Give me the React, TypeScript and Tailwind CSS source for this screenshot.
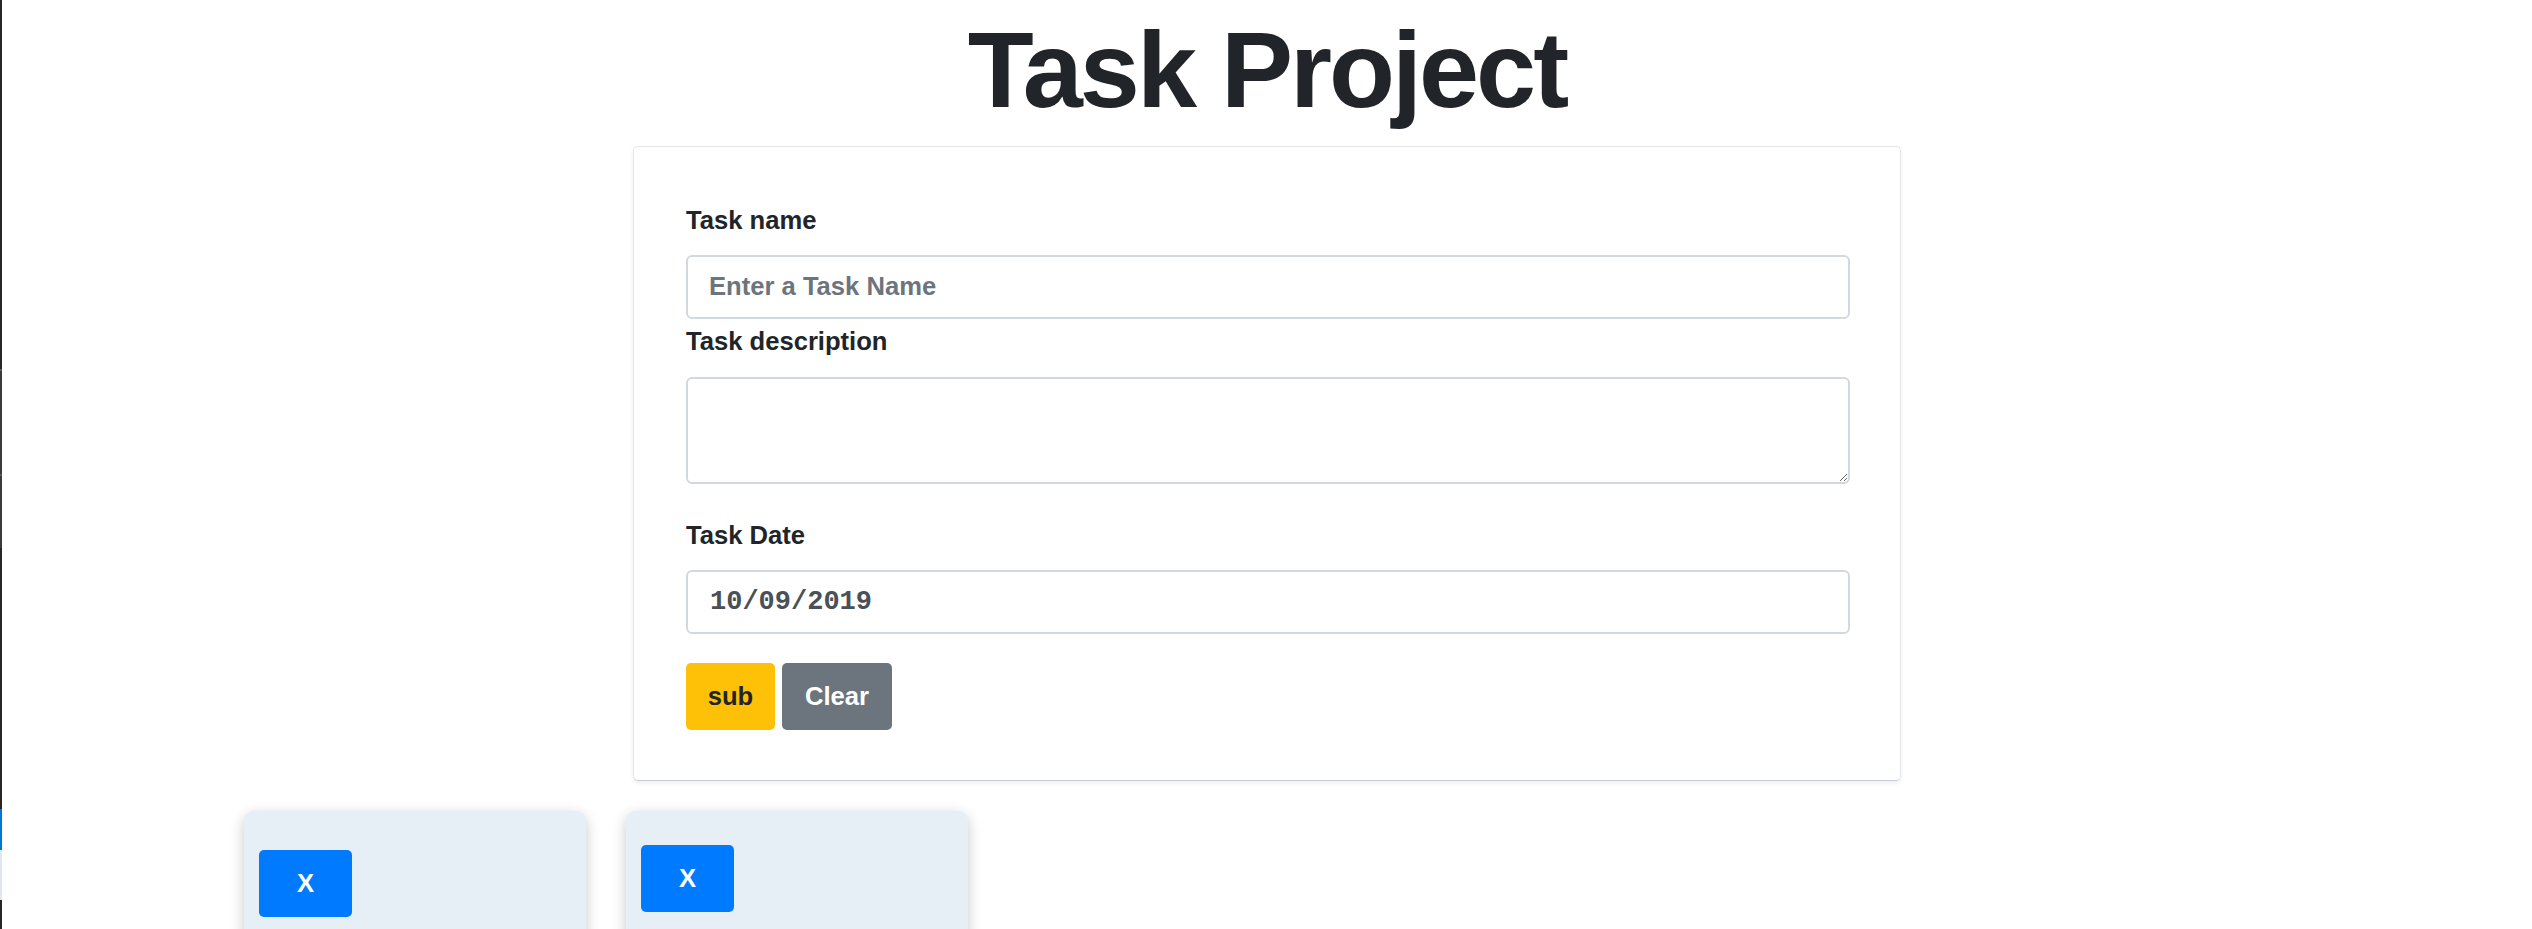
import React from "react";

function Label({ children, className = "" }: { children: React.ReactNode; className?: string }) {
  return (
    <label className={`block text-[25.6px] font-bold leading-[38px] text-[#212529] ${className}`}>
      {children}
    </label>
  );
}

function TaskCard({ topPad }: { topPad: string }) {
  return (
    <div
      className={`h-[220px] w-[342px] shrink-0 rounded-[10px] bg-[#e6eef6] pl-[15px] shadow-[0_4px_14px_0_rgba(0,0,0,0.22)] ${topPad}`}
    >
      <button
        type="button"
        className="flex h-[67px] w-[93px] items-center justify-center rounded-[5px] bg-[#007bff] text-[25.6px] font-bold text-white"
      >
        X
      </button>
    </div>
  );
}

export default function App() {
  return (
    <div className="flex min-h-[929px] bg-white font-['Liberation_Sans',Arial,sans-serif]">
      <div className="flex w-[2px] shrink-0 flex-col">
        <div className="h-[369px] bg-[#262626]" />
        <div className="h-[2px] bg-[#5a5a5a]" />
        <div className="h-[103px] bg-[#3a3a3a]" />
        <div className="h-[2px] bg-[#5a5a5a]" />
        <div className="h-[72px] bg-[#3a3a3a]" />
        <div className="h-[261px] bg-[#262626]" />
        <div className="h-[41px] bg-[#0078d7]" />
        <div className="h-[50px] bg-[#dfe8f0]" />
        <div className="flex-1 bg-[#262626]" />
      </div>
      <main className="min-w-0 flex-1 overflow-hidden">
        <h1 className="pt-[5px] text-center text-[108px] font-bold leading-[1.2] tracking-[-3px] text-[#212529]">
          Task Project
        </h1>
        <div className="mx-auto mt-[11px] w-[1268px] rounded-[5px] border border-[#e4e6ea] border-b-[#c9cdd5] bg-white pb-[50px] pl-[52px] pr-[50px] pt-[54px] shadow-[0_2px_4px_rgba(0,0,0,0.07)]">
          <form onSubmit={(e) => e.preventDefault()}>
            <Label>Task name</Label>
            <input
              type="text"
              placeholder="Enter a Task Name"
              className="mt-[16px] block h-[64px] w-full rounded-[6px] border-2 border-[#d3d8de] bg-white pl-[21px] text-[25.6px] font-bold text-[#495057] outline-none placeholder:text-[#6c757d]"
            />
            <Label className="mt-[3px]">Task description</Label>
            <textarea className="mt-[17px] block h-[107px] w-full rounded-[6px] border-2 border-[#d3d8de] bg-white px-[21px] py-[10px] text-[25.6px] font-bold text-[#495057] outline-none" />
            <Label className="mt-[32px]">Task Date</Label>
            <input
              type="text"
              defaultValue="10/09/2019"
              className="mt-[16px] block h-[64px] w-full rounded-[6px] border-2 border-[#d3d8de] bg-white pl-[22px] font-['Liberation_Mono',monospace] text-[27px] font-bold text-[#495057] outline-none"
            />
            <div className="mt-[29px] flex gap-[7px]">
              <button
                type="submit"
                className="h-[67px] w-[89px] rounded-[5px] bg-[#ffc107] text-[25.6px] font-bold text-[#212529]"
              >
                sub
              </button>
              <button
                type="button"
                className="h-[67px] w-[110px] rounded-[5px] bg-[#6c757d] text-[25.6px] font-bold text-white"
              >
                Clear
              </button>
            </div>
          </form>
        </div>
        <div className="mt-[30px] flex items-start gap-[40px] pl-[242px]">
          <TaskCard topPad="pt-[39px]" />
          <TaskCard topPad="pt-[34px]" />
        </div>
      </main>
    </div>
  );
}
